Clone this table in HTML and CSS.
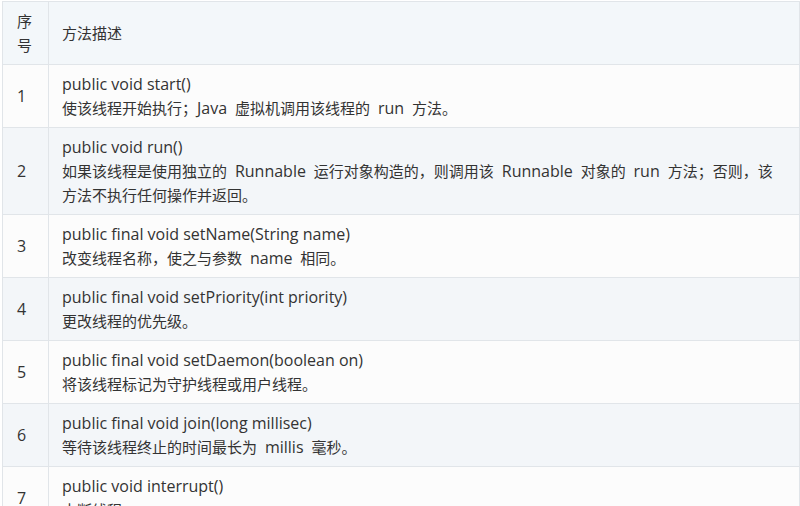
FILE: index.html
```html
<!DOCTYPE html>
<html lang="zh">
<head>
<meta charset="utf-8">
<link rel="stylesheet" href="styles.css">
</head>
<body>
<table class="methods">
  <thead>
    <tr><th class="num">序号</th><th class="desc">方法描述</th></tr>
  </thead>
  <tbody>
    <tr><td class="num"><span class="en">1</span></td><td class="desc"><span class="en">public void start()</span><br>使该线程开始执行<span class="p">；</span><span class="en w lead">Java</span> 虚拟机调用该线程的 <span class="en w">run</span> 方法。</td></tr>
    <tr><td class="num"><span class="en">2</span></td><td class="desc"><span class="en">public void run()</span><br>如果该线程是使用独立的 <span class="en w">Runnable</span> 运行对象构造的<span class="p">，</span>则调用该 <span class="en w">Runnable</span> 对象的 <span class="en w">run</span> 方法<span class="p">；</span>否则<span class="p">，</span>该方法不执行任何操作并返回。</td></tr>
    <tr><td class="num"><span class="en">3</span></td><td class="desc"><span class="en">public final void setName(String name)</span><br>改变线程名称<span class="p">，</span>使之与参数 <span class="en w">name</span> 相同。</td></tr>
    <tr><td class="num"><span class="en">4</span></td><td class="desc"><span class="en">public final void setPriority(int priority)</span><br>更改线程的优先级。</td></tr>
    <tr><td class="num"><span class="en">5</span></td><td class="desc"><span class="en">public final void setDaemon(boolean on)</span><br>将该线程标记为守护线程或用户线程。</td></tr>
    <tr><td class="num"><span class="en">6</span></td><td class="desc"><span class="en">public final void join(long millisec)</span><br>等待该线程终止的时间最长为 <span class="en w">millis</span> 毫秒。</td></tr>
    <tr><td class="num"><span class="en">7</span></td><td class="desc"><span class="en">public void interrupt()</span><br>中断线程。</td></tr>
  </tbody>
</table>
</body>
</html>
```

FILE: styles.css
```css
html, body {
  margin: 0;
  padding: 0;
  background: #ffffff;
  overflow: hidden;
}
body {
  padding: 1px 0 0 2px;
  font-family: "Open Sans", "Noto Sans CJK SC", sans-serif;
  font-size: 15px;
  color: #333333;
}
.methods {
  border-collapse: collapse;
  width: 798px;
  table-layout: fixed;
}
.methods th,
.methods td {
  border: 1px solid #e1e5e9;
  padding: 7px 13px;
  line-height: 24px;
  text-align: left;
  font-weight: normal;
  vertical-align: middle;
}
.methods .num {
  width: 46px;
  box-sizing: border-box;
  padding: 7px 14px;
  word-break: break-all;
}
.methods thead tr {
  background: #f3f7fa;
}
.methods tbody tr:nth-child(odd) {
  background: #fcfcfc;
}
.methods tbody tr:nth-child(even) {
  background: #f3f6f9;
}
.en {
  font-size: 16px;
}
.w {
  padding: 0 4px;
}
.w.lead {
  padding-left: 0;
}
.p {
  font-family: "Noto Sans CJK TC", sans-serif;
}
```
